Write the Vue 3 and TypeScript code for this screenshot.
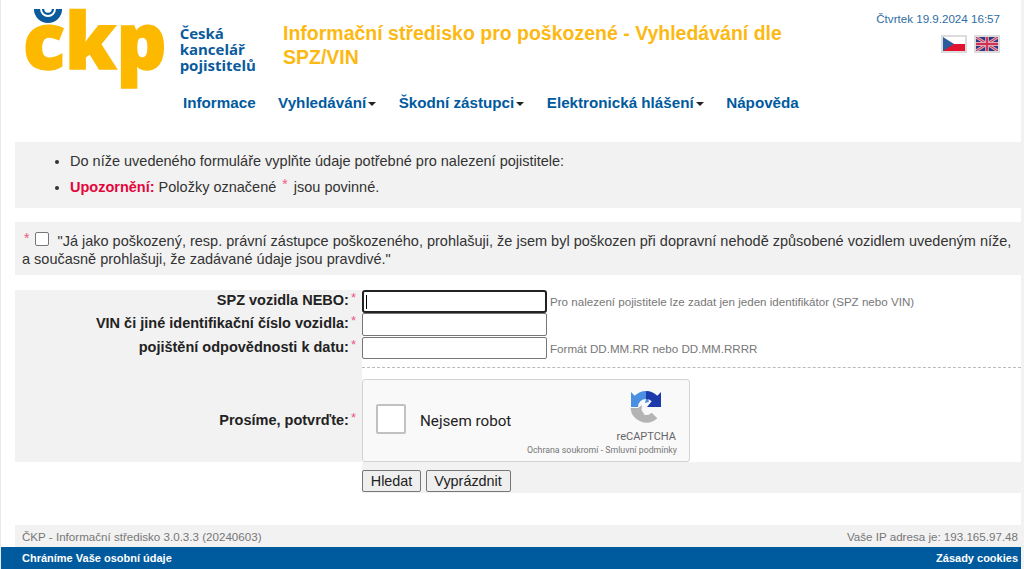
<script setup lang="ts">
const nav = [
  { label: 'Informace', caret: false },
  { label: 'Vyhledávání', caret: true },
  { label: 'Škodní zástupci', caret: true },
  { label: 'Elektronická hlášení', caret: true },
  { label: 'Nápověda', caret: false },
]
</script>

<template>
  <div class="page">
    <header class="head">
      <div class="logo">
        <svg class="caron" viewBox="0 0 32 16" width="30" height="15">
          <path d="M1 0 A15 15 0 0 0 31 0 L24.5 0 A8.5 8.5 0 0 1 7.5 0 Z" fill="#0a5a9c" />
          <path d="M9.5 0 A6.5 6.5 0 0 0 22.5 0 L20 0 A4 4 0 0 1 12 0 Z" fill="#0a5a9c" />
        </svg>
        <span class="ckp">ckp</span>
        <span class="logotext">Česká<br />kancelář<br />pojistitelů</span>
      </div>
      <h1 class="title">Informační středisko pro poškozené - Vyhledávání dle SPZ/VIN</h1>
      <div class="meta">
        <div class="date">Čtvrtek 19.9.2024 16:57</div>
        <div class="flags">
          <svg class="flag" viewBox="0 0 24 14" width="22" height="14" preserveAspectRatio="none">
            <rect width="24" height="7" fill="#fff" />
            <rect y="7" width="24" height="7" fill="#e3142d" />
            <path d="M0 0 L12 7 L0 14 Z" fill="#2b5c9e" />
          </svg>
          <svg class="flag" viewBox="0 0 24 14" width="22" height="14" preserveAspectRatio="none">
            <rect width="24" height="14" fill="#2c3a86" />
            <path d="M0 0 L24 14 M24 0 L0 14" stroke="#e0a8b8" stroke-width="3" />
            <path d="M0 0 L24 14 M24 0 L0 14" stroke="#c8304c" stroke-width="1" />
            <path d="M12 0 V14 M0 7 H24" stroke="#e0a8b8" stroke-width="4" />
            <path d="M12 0 V14 M0 7 H24" stroke="#d03050" stroke-width="2" />
          </svg>
        </div>
      </div>
    </header>

    <nav class="nav">
      <a v-for="item in nav" :key="item.label" class="navlink">{{ item.label }}<i v-if="item.caret" class="caret"></i></a>
    </nav>

    <section class="panel info">
      <ul>
        <li>Do níže uvedeného formuláře vyplňte údaje potřebné pro nalezení pojistitele:</li>
        <li><b class="warn">Upozornění:</b> Položky označené <sup class="req big">*</sup> jsou povinné.</li>
      </ul>
    </section>

    <section class="panel consent">
      <sup class="req big">*</sup>
      <span class="cb"></span>
      "Já jako poškozený, resp. právní zástupce poškozeného, prohlašuji, že jsem byl poškozen při dopravní nehodě způsobené vozidlem uvedeným níže, a současně prohlašuji, že zadávané údaje jsou pravdivé."
    </section>

    <section class="form">
      <div class="label">SPZ vozidla NEBO:<sup class="req">*</sup></div>
      <div class="field"><span class="input focus"><i class="cursor"></i></span><span class="hint">Pro nalezení pojistitele lze zadat jen jeden identifikátor (SPZ nebo VIN)</span></div>
      <div class="label">VIN či jiné identifikační číslo vozidla:<sup class="req">*</sup></div>
      <div class="field"><span class="input"></span></div>
      <div class="label">pojištění odpovědnosti k datu:<sup class="req">*</sup></div>
      <div class="field top"><span class="input short"></span><span class="hint">Formát DD.MM.RR nebo DD.MM.RRRR</span></div>
      <div class="label confirm">Prosíme, potvrďte:<sup class="req">*</sup></div>
      <div class="field dashed">
        <div class="captcha">
          <span class="cbox"></span>
          <span class="robot">Nejsem robot</span>
          <div class="cbrand">
            <svg viewBox="0 0 34 34" width="34" height="34">
              <path d="M17 1 A16 16 0 0 0 5.7 5.7 L2 2 V17 H9 A8 8 0 0 1 17 9 L16 13 L20 12 Z" fill="#4a90e2" />
              <path d="M17 1 A16 16 0 0 1 28.3 5.7 L32 2 V17 H18 L22.7 11.3 A8 8 0 0 0 17 9 Z" fill="#1c3aa9" />
              <path d="M1.5 18 H9 L13 15 L12.5 20 L15.5 24.8 A8 8 0 0 0 22.7 22.7 L28.3 28.3 A16 16 0 0 1 1.5 18 Z" fill="#b4b4b4" />
            </svg>
            <span class="rc">reCAPTCHA</span>
          </div>
          <span class="terms">Ochrana soukromí - Smluvní podmínky</span>
        </div>
      </div>
      <div class="blank"></div>
      <div class="buttons">
        <span class="btn">Hledat</span><span class="btn">Vyprázdnit</span>
      </div>
    </section>

    <footer class="foot">
      <span>ČKP - Informační středisko 3.0.3.3 (20240603)</span>
      <span>Vaše IP adresa je: 193.165.97.48</span>
    </footer>
    <div class="bottom">
      <span>Chráníme Vaše osobní údaje</span>
      <span>Zásady cookies</span>
    </div>
  </div>
</template>

<style>
html, body { margin: 0; background: #fff; }
</style>

<style scoped>
.page {
  width: 1024px; height: 569px; box-sizing: border-box; overflow: hidden;
  border-left: 1px solid #e9e9e9; border-right: 3px solid #f2f2f2;
  font-family: "Liberation Sans", Arial, sans-serif; font-size: 14.5px; color: #333;
  display: flex; flex-direction: column;
}
.head { display: flex; height: 90px; flex: none; }
.logo { position: relative; width: 281px; flex: none; display: flex; align-items: flex-start; }
.caron { position: absolute; left: 32px; top: 9px; }
.ckp {
  color: #fdb900; font-family: "Open Sans", sans-serif; font-weight: 800; font-size: 78px; line-height: 80px;
  margin: -1px 0 0 22px; letter-spacing: 0; -webkit-text-stroke: 1.5px #fdb900;
}
.logotext {
  color: #0a5a9c; font-family: "Open Sans", sans-serif; font-weight: 700; font-size: 15px; line-height: 16px;
  margin: 25px 0 0 13px;
}
.title { margin: 21px 0 0 1px; width: 530px; flex: none; color: #fdb913; font-size: 19.5px; line-height: 24px; font-weight: 700; }
.meta { flex: 1; display: flex; flex-direction: column; align-items: flex-end; padding: 12px 21px 0 0; }
.date { font-size: 11.6px; color: #2e6da4; line-height: 14px; }
.flags { display: flex; gap: 7px; margin-top: 9px; }
.flag { border: 2px solid #dcdcdc; box-sizing: content-box; display: block; }
.nav { display: flex; height: 52px; flex: none; align-items: flex-start; padding: 4px 0 0 182px; gap: 22.5px; box-sizing: border-box; }
.navlink { color: #005a9e; font-weight: 700; font-size: 15.2px; line-height: 18px; display: flex; align-items: center; }
.caret { width: 0; height: 0; border: 4px solid transparent; border-top: 4px solid #222; border-bottom: 0; margin-left: 2px; margin-top: 2px; }
.panel { background: #f2f2f2; margin-left: 14px; flex: none; }
.info { height: 66px; box-sizing: border-box; }
.info ul { margin: 0; padding: 10px 0 0 55px; }
.info li { line-height: 18px; margin-bottom: 8px; }
.warn { color: #e2063c; }
.req { color: #ee5a7c; font-size: 13px; line-height: 0; font-weight: 400; vertical-align: 3px; margin-left: 2px; }
.req.big { font-size: 14px; vertical-align: 3px; padding: 0 2px; margin: 0; }
.consent { margin-top: 14px; height: 53px; box-sizing: border-box; padding: 10px 8px 0 7px; line-height: 18px; }
.cb { display: inline-block; width: 12px; height: 12px; border: 1px solid #777; border-radius: 2px; background: #fff; margin: 0 4px 0 4px; vertical-align: 0; }
.form {
  margin: 15px 0 0 14px; display: grid; grid-template-columns: 347px 1fr; flex: none;
  grid-template-rows: 23px 24px 30px 95px 31px; height: 203px;
}
.label { background: #f2f2f2; font-weight: 700; font-size: 14.5px; text-align: right; padding-right: 6px; color: #222; line-height: 20px; white-space: nowrap; }
.label.confirm { padding-top: 43px; box-sizing: border-box; }
.field { display: flex; align-items: flex-start; }
.input { width: 185px; height: 23px; box-sizing: border-box; border: 1px solid #777; border-radius: 2px; background: #fff; flex: none; display: flex; align-items: center; }
.input.short { height: 22px; }
.input.focus { border: 2px solid #222; border-radius: 3px; }
.cursor { width: 1px; height: 14px; background: #000; margin-left: 2px; }
.hint { font-size: 11.6px; color: #777; margin-left: 3px; line-height: 23px; }
.dashed { border-top: 1px dashed #bbb; padding-top: 11px; box-sizing: border-box; }
.captcha { position: relative; width: 328px; height: 83px; box-sizing: border-box; background: #f9f9f9; border: 1px solid #d3d3d3; border-radius: 3px; font-family: Roboto, sans-serif; display: flex; align-items: center; }
.cbox { width: 30px; height: 30px; box-sizing: border-box; border: 2px solid #c1c1c1; border-radius: 2px; background: #fff; margin-left: 13px; margin-top: -3px; }
.robot { font-size: 15.2px; color: #222; margin-left: 14px; }
.cbrand { position: absolute; right: 13px; top: 10px; display: flex; flex-direction: column; align-items: center; }
.rc { font-size: 11px; color: #666; margin-top: 6px; }
.terms { position: absolute; right: 12px; bottom: 6px; font-size: 8.8px; color: #777; }
.blank { background: #fff; }
.buttons { background: #f2f2f2; display: flex; gap: 4.5px; padding-top: 8px; align-items: flex-start; box-sizing: border-box; }
.btn { height: 22px; box-sizing: border-box; border: 1px solid #767676; border-radius: 2px; background: #efefef; color: #222; padding: 0 7.75px; line-height: 20px; font-size: 14.4px; }
.foot { margin: 32px 0 0 14px; height: 22px; flex: none; background: #f2f2f2; color: #777; font-size: 11.6px; display: flex; justify-content: space-between; align-items: center; padding: 0 3px 0 7px; }
.bottom { height: 22px; flex: none; background: #005a9e; color: #fff; font-size: 11px; font-weight: 700; display: flex; justify-content: space-between; align-items: center; padding: 0 3px 0 21px; }
</style>
